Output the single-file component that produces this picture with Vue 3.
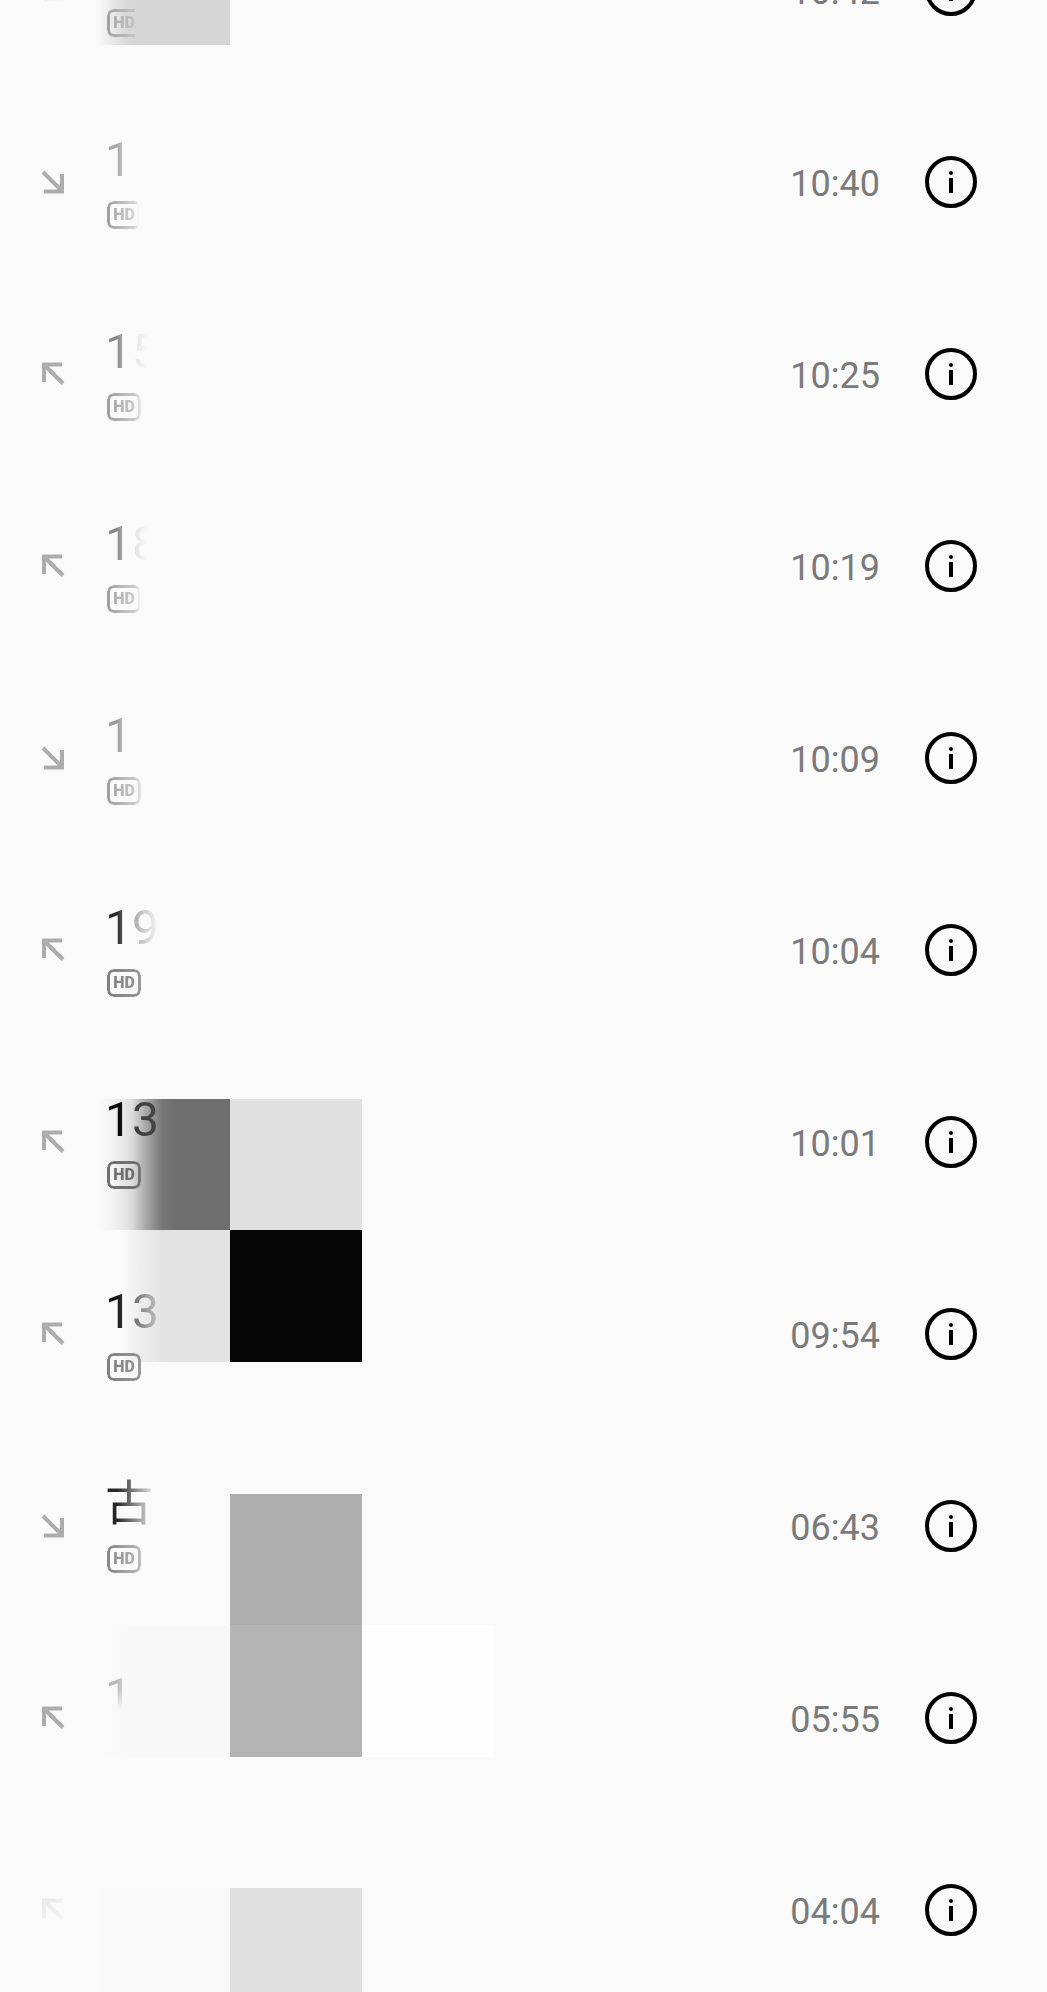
<script setup>
import { ref } from "vue"

// ink / badge: opacity at the left edge, at the second glyph and where it ends (px)
const calls = ref([
  { time: "10:42", type: "in", name: "", badge: [0.7, 0.2, 26], faint: true },
  { time: "10:40", type: "in", name: "1", ink: [0.32, 0.05, 30], badge: [0.75, 0.3, 32] },
  { time: "10:25", type: "out", name: "15", ink: [0.45, 0.11, 42], badge: [0.75, 0.4, 37] },
  { time: "10:19", type: "out", name: "18", ink: [0.45, 0.11, 42], badge: [0.75, 0.35, 34] },
  { time: "10:09", type: "in", name: "1", ink: [0.38, 0.05, 30], badge: [0.75, 0.4, 38] },
  { time: "10:04", type: "out", name: "19", ink: [0.84, 0.32, 54], badge: [1, 0.85, 90] },
  { time: "10:01", type: "out", name: "13", ink: [1, 0.74, 100], badge: [1, 1, 100], dark: true },
  { time: "09:54", type: "out", name: "13", ink: [0.92, 0.56, 62], badge: [1, 0.85, 90] },
  { time: "06:43", type: "in", name: "古", ink: [0.85, 0.5, 52], badge: [0.95, 0.6, 56] },
  { time: "05:55", type: "out", name: "1", ink: [0.26, 0, 26], sink: true },
  { time: "04:04", type: "out", name: "", faint: true }
])

function fade(stops, hold) {
  if (!stops) return {}
  const [a, b, end] = stops
  return {
    maskImage: `linear-gradient(to right, rgba(0,0,0,${a}) ${hold}px, rgba(0,0,0,${b}) 28px, transparent ${end}px)`
  }
}

function openDetails(call) {
  console.log(call.time)
}
</script>

<template>
  <main class="screen">
    <div class="mosaic" aria-hidden="true">
      <div class="tile t1"></div>
      <div class="tile t2"></div>
      <div class="tile t3"></div>
      <div class="tile t4"></div>
      <div class="tile t5"></div>
      <div class="tile t6"></div>
      <div class="tile t7"></div>
      <div class="tile t8"></div>
      <div class="tile t9"></div>
      <div class="tile t10"></div>
      <div class="tile t11"></div>
    </div>

    <ul class="calls">
      <li class="call" v-for="call in calls" :key="call.time">
        <svg v-if="call.type === 'in'" class="arrow" :class="{ faint: call.faint }" viewBox="0 0 24 24">
          <path d="M2 2L21 21M21 4V21.500H3" />
        </svg>
        <svg v-else class="arrow" :class="{ faint: call.faint }" viewBox="0 0 24 24">
          <path d="M22 21.500L3 2.500M3 20V2.500H21" />
        </svg>

        <div class="who">
          <span class="name" :class="{ sink: call.sink }" :style="fade(call.ink, 12)">{{ call.name }}</span>
          <span v-if="call.badge" class="badge" :class="{ dark: call.dark }" :style="fade(call.badge, 0)">HD</span>
        </div>

        <time class="time">{{ call.time }}</time>
        <button class="info" type="button" :aria-label="'Details ' + call.time" @click="openDetails(call)">
          <svg viewBox="0 0 52 52">
            <circle class="ring" cx="26" cy="26" r="24" />
            <circle cx="26" cy="17" r="2" />
            <rect x="24" y="22" width="4" height="15" />
          </svg>
        </button>
      </li>
    </ul>
  </main>
</template>

<style>
body {
  background: #fafafa;
}
</style>

<style scoped>
.screen {
  position: relative;
  height: 100vh;
  overflow: hidden;
  background: #fafafa;
  font-family: Roboto, "Noto Sans CJK SC", sans-serif;
}

/* grey blocks lying under the list */
.mosaic {
  position: absolute;
  inset: 0;
  display: grid;
  grid-template-columns: 98px 132px 132px 132px;
  grid-template-rows: 45px 1054px 131px 132px 132px 131px 132px 131px 1fr;
}

.t1 {
  grid-area: 1 / 2;
  background: linear-gradient(to right, #fafafa, #ebebeb 12px, #d9d9d9 28px, #d6d6d6 40px);
}

.t2 {
  grid-area: 3 / 2;
  background: linear-gradient(to right, #fafafa, #f4f4f4 14px, #dcdcdc 34px, #a8a8a8 48px, #787878 64px, #6e6e6e 78px);
}

.t3 {
  grid-area: 3 / 3;
  background: #e0e0e0;
}

.t4 {
  grid-area: 4 / 2;
  background: linear-gradient(to right, #fafafa, #fafafa 24px, #ededed 42px, #e3e3e3 66px);
}

.t5 {
  grid-area: 4 / 3;
  background: #050505;
}

.t6 {
  grid-area: 6 / 3;
  background: #aeaeae;
}

.t7 {
  grid-area: 7 / 3;
  background: #b4b4b4;
}

.t8 {
  grid-area: 7 / 2;
  background: linear-gradient(to right, #fafafa, #f8f8f8 30px);
}

.t9 {
  grid-area: 7 / 4;
  background: #fdfdfd;
}

.t10 {
  grid-area: 9 / 3;
  background: #e0e0e0;
}

.t11 {
  grid-area: 9 / 2;
  background: #f9f9f9;
}

.calls {
  position: relative;
  list-style: none;
  margin: -106px 0 0;
  padding: 0;
}

.call {
  display: flex;
  align-items: center;
  height: 192px;
  padding: 0 70px 0 41px;
}

.arrow {
  width: 24px;
  height: 24px;
  margin-right: 40px;
  fill: none;
  stroke: #adadad;
  stroke-width: 4;
}

.faint {
  opacity: 0.5;
  mask-image: linear-gradient(135deg, rgba(0, 0, 0, 0.5), rgba(0, 0, 0, 0.1));
}

.who {
  flex: 1;
  align-self: flex-start;
  padding-top: 46px;
}

.name {
  display: block;
  height: 56px;
  font-size: 48px;
  line-height: 56px;
  color: #000;
}

.sink {
  color: transparent;
  background: linear-gradient(#000 20px, transparent 42px);
  background-clip: text;
}

.badge {
  display: flex;
  align-items: center;
  justify-content: center;
  box-sizing: border-box;
  width: 34px;
  height: 28px;
  margin: 13px 0 0 2px;
  border: 3px solid #808080;
  border-radius: 7px;
  font-size: 16px;
  font-weight: 900;
  line-height: 20px;
  color: #808080;
}

.badge.dark {
  border-color: #707070;
  color: #707070;
}

.time {
  padding-top: 4px;
  font-size: 36px;
  line-height: 42px;
  color: #7a7a7a;
}

.info {
  width: 52px;
  height: 52px;
  margin-left: 45px;
  padding: 0;
  border: none;
  background: none;
  cursor: pointer;
}

.info svg {
  display: block;
  width: 52px;
  height: 52px;
}

.ring {
  fill: none;
  stroke: #000;
  stroke-width: 4;
}
</style>
